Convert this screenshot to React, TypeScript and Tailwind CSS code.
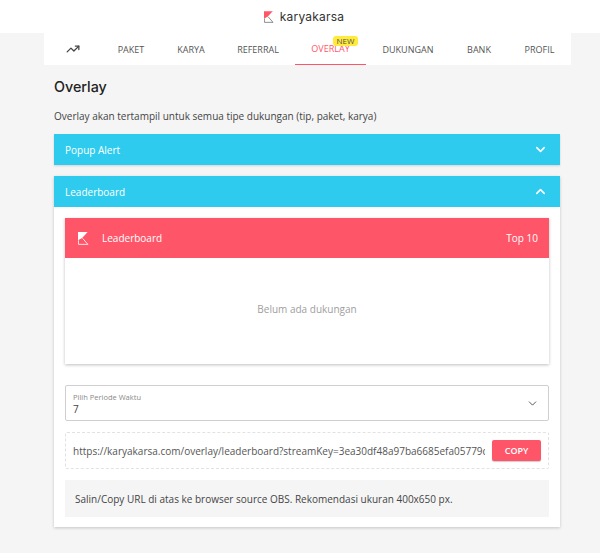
import React from 'react';
import { ChevronDown, ChevronUp, TrendingUp } from 'lucide-react';

const Logo: React.FC<{ className?: string; fill: string; stroke: string }> = ({ className, fill, stroke }) => (
  <svg viewBox="0 0 12 14" className={className}>
    <path d="M0 0H10.5L4.5 6.5L0 9Z" fill={fill} />
    <path d="M0.5 9V13.4H10.8L5 6.8" fill="none" stroke={stroke} strokeWidth="0.9" />
  </svg>
);

const navItems = ['PAKET', 'KARYA', 'REFERRAL', 'OVERLAY', 'DUKUNGAN', 'BANK', 'PROFIL'];

const widths: Record<string, string> = {
  PAKET: 'w-[60px]',
  KARYA: 'w-[60px]',
  REFERRAL: 'w-[74px]',
  OVERLAY: 'w-[71px]',
  DUKUNGAN: 'w-[84px]',
  BANK: 'w-[58px]',
  PROFIL: 'w-[63px]',
};

const App: React.FC = () => {
  return (
    <div className="min-h-[553px] bg-[#f5f5f5] font-['Open_Sans',sans-serif] text-[#424242] overflow-hidden">
      <header className="h-[33px] bg-white flex items-center justify-center gap-[6px] pl-[8px]">
        <Logo className="w-[10px] h-[12px]" fill="#ff5569" stroke="#666666" />
        <span className="font-['Inter',sans-serif] text-[12px] text-[#333] tracking-[0.2px]">karyakarsa</span>
      </header>

      <nav className="ml-[44px] w-[527px] h-[32px] bg-white flex items-stretch text-[9px] font-medium text-[#555]">
        <div className="w-[57px] flex items-center justify-center">
          <TrendingUp size={14} strokeWidth={2.2} className="text-[#444]" />
        </div>
        {navItems.map((item) => {
          const active = item === 'OVERLAY';
          return (
            <div
              key={item}
              className={`relative flex items-center justify-center pt-[1px] ${widths[item]} ${active ? 'text-[#ff5569] border-b border-[#ff5569]' : ''}`}
            >
              {item}
              {active && (
                <span className="absolute top-[3px] left-[38px] w-[25px] h-[10px] rounded-[3px] bg-[#ffeb3b] text-center text-[8px] leading-[10px] text-[#555]">
                  NEW
                </span>
              )}
            </div>
          );
        })}
      </nav>

      <main className="ml-[54px] w-[506px]">
        <h1 className="pt-[12px] font-['Inter',sans-serif] text-[14.3px] leading-[20px] font-medium text-[#222]">Overlay</h1>
        <p className="mt-[12px] text-[10px] leading-[14px] text-[#444]">
          Overlay akan tertampil untuk semua tipe dukungan (tip, paket, karya)
        </p>

        <div className="mt-[11px] h-[31px] bg-[#2fcbee] text-white text-[10px] flex items-center justify-between pl-[11px] pr-[12px] shadow-[0_1px_2px_rgba(0,0,0,0.15)]">
          <span className="pt-[1px]">Popup Alert</span>
          <ChevronDown size={15} strokeWidth={2.5} />
        </div>

        <section className="mt-[11px] bg-white shadow-[0_1px_3px_rgba(0,0,0,0.2)]">
          <div className="h-[31px] bg-[#2fcbee] text-white text-[10px] flex items-center justify-between pl-[11px] pr-[12px]">
            <span className="pt-[1px]">Leaderboard</span>
            <ChevronUp size={15} strokeWidth={2.5} />
          </div>

          <div className="px-[11px] pt-[11px] pb-[10px]">
            <div className="shadow-[0_1px_3px_rgba(0,0,0,0.25)]">
              <div className="h-[40px] bg-[#ff5569] text-white text-[10px] flex items-center justify-between pl-[13px] pr-[11px]">
                <div className="flex items-center gap-[13px]">
                  <Logo className="w-[11px] h-[13px]" fill="#ffffff" stroke="#ffffff" />
                  <span className="pt-[1px]">Leaderboard</span>
                </div>
                <span className="pt-[1px]">Top 10</span>
              </div>
              <div className="h-[106px] pb-[4px] bg-white flex items-center justify-center text-[10px] text-[#9e9e9e]">
                Belum ada dukungan
              </div>
            </div>

            <div className="mt-[21px] h-[36px] rounded-[2px] border border-[#cfcfcf] flex items-center justify-between pl-[7px] pr-[9px]">
              <div className="flex flex-col pt-[2px]">
                <span className="text-[7.5px] leading-[10px] text-[#8a8a8a]">Pilih Periode Waktu</span>
                <span className="text-[10px] leading-[14px] text-[#444]">7</span>
              </div>
              <ChevronDown size={13} strokeWidth={1.8} className="text-[#555]" />
            </div>

            <div className="mt-[11px] h-[37px] rounded-[2px] border border-dashed border-[#e2e2e2] flex items-center pl-[7px] pr-[7px] gap-[7px]">
              <span className="flex-1 min-w-0 overflow-hidden whitespace-nowrap pt-[1px] text-[10px] text-[#555]">
                https://karyakarsa.com/overlay/leaderboard?streamKey=3ea30df48a97ba6685efa05779c2
              </span>
              <button className="w-[49px] h-[21px] rounded-[2px] bg-[#ff5569] text-white text-[9px] font-semibold shadow-[0_1px_1px_rgba(0,0,0,0.2)]">
                COPY
              </button>
            </div>

            <div className="mt-[11px] h-[37px] bg-[#f5f5f5] flex items-center px-[10px] pt-[1px] text-[10px] text-[#444]">
              Salin/Copy URL di atas ke browser source OBS. Rekomendasi ukuran 400x650 px.
            </div>
          </div>
        </section>
      </main>
    </div>
  );
};

export default App;
